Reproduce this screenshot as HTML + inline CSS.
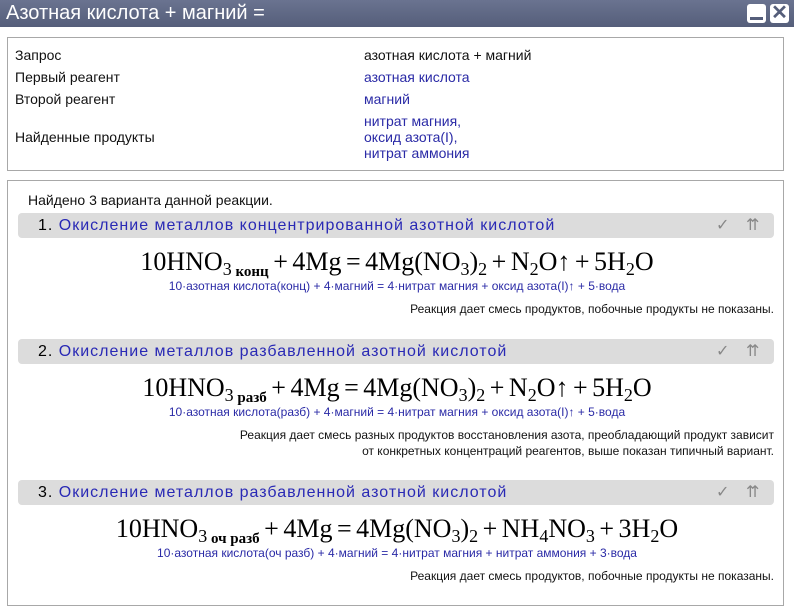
<!DOCTYPE html>
<html><head><meta charset="utf-8"><style>
*{margin:0;padding:0;box-sizing:border-box}
body{width:794px;height:609px;background:#fff;font-family:"Liberation Sans",Arial,sans-serif;position:relative;overflow:hidden}
.tb{position:absolute;left:0;top:0;width:794px;height:27px;background:linear-gradient(#6a7390,#555e7a);color:#fff;font-size:20px;line-height:27px;padding-left:6px}
.btn{position:absolute;top:4px;width:19px;height:19px;background:#fff;border-radius:3px}
.box{position:absolute;left:7px;width:777px;border:1px solid #a8a8a8;background:#fff}
.t{position:absolute;font-size:14px;color:#111;white-space:nowrap}
.v{color:#2a2aa6}
.bar{position:absolute;left:18px;width:756px;height:25px;background:#dcdcdc;border-radius:4px;font-size:16px;line-height:25px;padding-left:20px;letter-spacing:1px}
.bar b{font-weight:normal;color:#2929b5}
.bar i{position:absolute;font-style:normal;color:#888;font-size:16px;top:0;letter-spacing:0}
.f{position:absolute;left:0;width:794px;text-align:center;font-family:"Liberation Serif","Times New Roman",serif;font-size:26px;color:#000;white-space:nowrap;line-height:30px;word-spacing:-2px}
.f sub{font-size:18px;vertical-align:-5px;line-height:0}
.f .s{font-size:15px;font-weight:bold;vertical-align:-6px;word-spacing:0}
.d{position:absolute;left:0;width:794px;text-align:center;font-size:12px;color:#2a2aa6;white-space:nowrap}
.n{position:absolute;right:20px;text-align:right;font-size:12px;color:#111;line-height:16px;white-space:nowrap}
</style></head><body>
<div class="tb">Азотная кислота + магний =</div>
<div class="btn" style="left:747px"><div style="position:absolute;left:3px;right:3px;bottom:3px;height:3px;background:#555e7a"></div></div>
<div class="btn" style="left:770px;color:#555e7a;font-size:20px;line-height:19px;text-align:center;font-weight:bold">✕</div>

<div class="box" style="top:37px;height:134px"></div>
<div class="t" style="left:15px;top:47px">Запрос</div><div class="t" style="left:364px;top:47px">азотная кислота + магний</div>
<div class="t" style="left:15px;top:69px">Первый реагент</div><div class="t v" style="left:364px;top:69px">азотная кислота</div>
<div class="t" style="left:15px;top:91px">Второй реагент</div><div class="t v" style="left:364px;top:91px">магний</div>
<div class="t" style="left:15px;top:129px">Найденные продукты</div>
<div class="t v" style="left:364px;top:113px;line-height:16px">нитрат магния,<br>оксид азота(I),<br>нитрат аммония</div>

<div class="box" style="top:180px;height:426px"></div>
<div class="t" style="left:28px;top:192px">Найдено 3 варианта данной реакции.</div>

<div class="bar" style="top:213px">1. <b>Окисление металлов концентрированной азотной кислотой</b><i style="left:698px">✓</i><i style="left:728px">⇈</i></div>
<div class="f" style="top:247px">10HNO<sub>3</sub><span class="s"> конц</span> + 4Mg = 4Mg(NO<sub>3</sub>)<sub>2</sub> + N<sub>2</sub>O↑ + 5H<sub>2</sub>O</div>
<div class="d" style="top:279px">10·азотная кислота(конц) + 4·магний = 4·нитрат магния + оксид азота(I)↑ + 5·вода</div>
<div class="n" style="top:301px">Реакция дает смесь продуктов, побочные продукты не показаны.</div>

<div class="bar" style="top:339px">2. <b>Окисление металлов разбавленной азотной кислотой</b><i style="left:698px">✓</i><i style="left:728px">⇈</i></div>
<div class="f" style="top:373px">10HNO<sub>3</sub><span class="s"> разб</span> + 4Mg = 4Mg(NO<sub>3</sub>)<sub>2</sub> + N<sub>2</sub>O↑ + 5H<sub>2</sub>O</div>
<div class="d" style="top:405px">10·азотная кислота(разб) + 4·магний = 4·нитрат магния + оксид азота(I)↑ + 5·вода</div>
<div class="n" style="top:427px">Реакция дает смесь разных продуктов восстановления азота, преобладающий продукт зависит<br>от конкретных концентраций реагентов, выше показан типичный вариант.</div>

<div class="bar" style="top:480px">3. <b>Окисление металлов разбавленной азотной кислотой</b><i style="left:698px">✓</i><i style="left:728px">⇈</i></div>
<div class="f" style="top:514px">10HNO<sub>3</sub><span class="s"> оч разб</span> + 4Mg = 4Mg(NO<sub>3</sub>)<sub>2</sub> + NH<sub>4</sub>NO<sub>3</sub> + 3H<sub>2</sub>O</div>
<div class="d" style="top:546px">10·азотная кислота(оч разб) + 4·магний = 4·нитрат магния + нитрат аммония + 3·вода</div>
<div class="n" style="top:568px">Реакция дает смесь продуктов, побочные продукты не показаны.</div>
</body></html>
